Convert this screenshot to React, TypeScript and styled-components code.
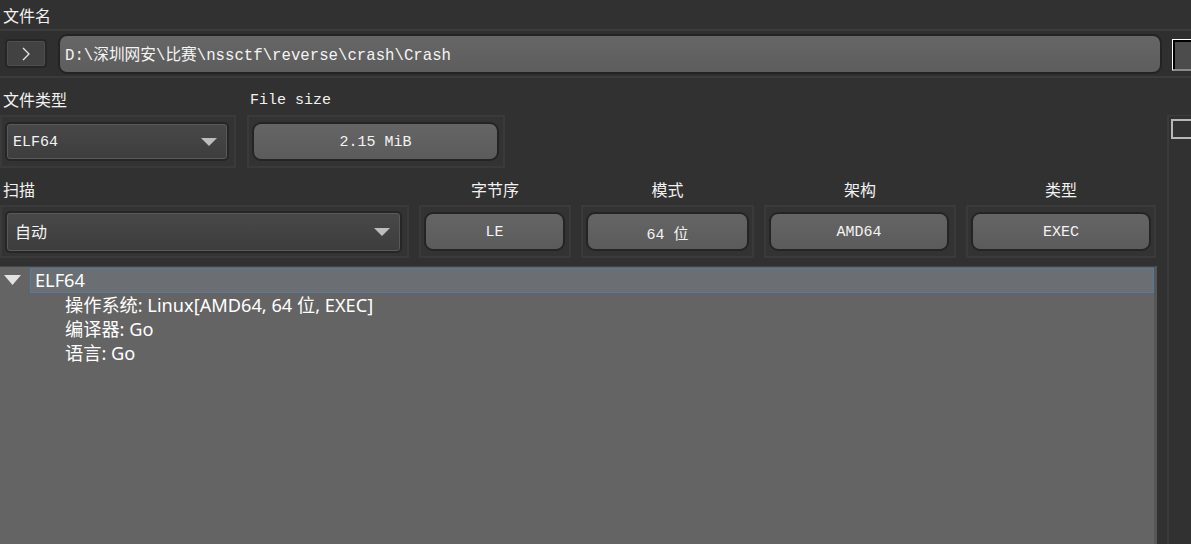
import React from "react";
import styled, { createGlobalStyle } from "styled-components";

const GlobalStyle = createGlobalStyle`
  html, body {
    margin: 0;
    padding: 0;
    background: #313131;
    overflow: hidden;
  }
  body {
    font-family: "Noto Sans", "Noto Sans CJK SC", sans-serif;
    color: #f2f2f2;
  }
  * { box-sizing: border-box; }
`;

const MONO = `"Liberation Mono", "Noto Sans CJK SC", monospace`;
const CJK = `"Noto Sans CJK SC", "Noto Sans", sans-serif`;

const Page = styled.div`
  width: 1191px;
  height: 544px;
  display: flex;
  flex-direction: column;
  overflow: hidden;
`;

const TopLabel = styled.div`
  height: 29px;
  padding-left: 3px;
  display: flex;
  align-items: center;
  font-family: ${CJK};
  font-size: 16px;
  color: #f2f2f2;
`;

const PathBar = styled.div`
  height: 49px;
  border-top: 2px solid #3b3b3b;
  border-bottom: 2px solid #3b3b3b;
  display: flex;
  align-items: center;
  padding-left: 5px;
  background: #2f2f2f;
`;

const IconButton = styled.div`
  width: 42px;
  height: 29px;
  flex: none;
  border: 2px solid #262626;
  border-radius: 4px;
  background: #424242;
  box-shadow: inset 0 0 0 1px #4e4e4e;
  display: flex;
  align-items: center;
  justify-content: center;
`;

const PathInput = styled.div`
  margin-left: 11px;
  width: 1104px;
  height: 40px;
  flex: none;
  border: 2px solid #232323;
  border-radius: 9px;
  background: linear-gradient(#666666, #5d5d5d);
  display: flex;
  align-items: center;
  padding-left: 5px;
  font-family: ${MONO};
  font-size: 15.7px;
  color: #f4f4f4;
  white-space: nowrap;
`;

const EdgeButton = styled.div`
  margin-left: 10px;
  width: 30px;
  height: 32px;
  flex: none;
  border-top: 1px solid #ffffff;
  border-left: 1px solid #ffffff;
  border-bottom: 2px solid #8a8a8a;
  background: #4c4c4c;
  box-shadow: inset 1px 1px 0 #000, inset 2px 2px 0 #000;
  margin-top: 2px;
`;

const Body = styled.div`
  flex: 1;
  display: flex;
  min-height: 0;
`;

const Main = styled.div`
  width: 1167px;
  flex: none;
  display: flex;
  flex-direction: column;
`;

const FieldGrid = styled.div<{ $cols: string; $gap?: number }>`
  display: grid;
  grid-template-columns: ${(p) => p.$cols};
  grid-template-rows: 37px 53px;
  column-gap: ${(p) => p.$gap ?? 10}px;
`;

const FieldLabel = styled.div<{ $center?: boolean; $mono?: boolean }>`
  display: flex;
  align-items: flex-end;
  justify-content: ${(p) => (p.$center ? "center" : "flex-start")};
  padding-left: ${(p) => (p.$center ? "0" : "3px")};
  padding-bottom: ${(p) => (p.$mono ? "6px" : "4px")};
  font-family: ${(p) => (p.$mono ? MONO : CJK)};
  font-size: ${(p) => (p.$mono ? "15px" : "16px")};
  color: #f2f2f2;
`;

const Frame = styled.div`
  border: 2px solid #3a3a3a;
  background: #333333;
  display: flex;
  align-items: center;
  padding: 0 3px;
`;

const Combo = styled.div<{ $w: number; $h: number }>`
  width: ${(p) => p.$w}px;
  height: ${(p) => p.$h}px;
  border: 2px solid #262626;
  border-radius: 5px;
  background: linear-gradient(#484848, #3d3d3d);
  box-shadow: inset 0 0 0 1px #595959;
  display: flex;
  align-items: center;
  justify-content: space-between;
  padding: 0 10px 0 6px;
`;

const ComboText = styled.span<{ $mono?: boolean }>`
  font-family: ${(p) => (p.$mono ? MONO : CJK)};
  font-size: ${(p) => (p.$mono ? "15px" : "16px")};
  color: #f4f4f4;
  padding-left: ${(p) => (p.$mono ? "0" : "2px")};
  margin-top: ${(p) => (p.$mono ? "1px" : "-2px")};
`;

const ValueButton = styled.div<{ $w: number }>`
  width: ${(p) => p.$w}px;
  height: 39px;
  border: 2px solid #242424;
  border-radius: 9px;
  background: linear-gradient(#656565, #5b5b5b);
  display: flex;
  align-items: center;
  justify-content: center;
  padding-top: 2px;
  font-family: ${MONO};
  font-size: 15px;
  color: #f4f4f4;
  white-space: pre;
`;

const Tree = styled.div`
  margin-top: 8px;
  width: 1157px;
  flex: 1;
  background: #646464;
  border-top: 1px solid #454545;
  border-right: 3px solid #575757;
  padding-top: 1px;
  font-family: "Noto Sans", "Noto Sans CJK SC", sans-serif;
  font-size: 18.2px;
  color: #ffffff;
`;

const TreeRow = styled.div<{ $depth: number }>`
  height: 24px;
  display: flex;
  align-items: center;
  padding-left: ${(p) => (p.$depth === 0 ? 4 : 65)}px;
  white-space: nowrap;
`;

const Caret = styled.div`
  width: 26px;
  display: flex;
  align-items: center;
  flex: none;
`;

const Selection = styled.div`
  flex: 1;
  height: 25px;
  display: flex;
  align-items: center;
  padding-left: 4px;
  background: #6b6f73;
  border: 1px solid #587a99;
`;

const Side = styled.div`
  flex: 1;
  margin-top: 37px;
  border-left: 2px solid #3b3b3b;
  display: flex;
  flex-direction: column;
`;

const SideFrame = styled.div`
  border-top: 1px solid #3b3b3b;
  padding: 3px 0 0 2px;
`;

const CheckBox = styled.div`
  width: 24px;
  height: 20px;
  border: 2px solid #b8b8b8;
  border-right: none;
  background: #323232;
`;

const DownArrow = ({ color, w, h }: { color: string; w: number; h: number }) => (
  <svg width={w} height={h} viewBox={`0 0 ${w} ${h}`}>
    <polygon points={`0,0 ${w},0 ${w / 2},${h}`} fill={color} />
  </svg>
);

export default function App() {
  return (
    <>
      <GlobalStyle />
      <Page>
        <TopLabel>文件名</TopLabel>
        <PathBar>
          <IconButton>
            <svg width="10" height="14" viewBox="0 0 10 14">
              <polyline points="2,1 8,7 2,13" fill="none" stroke="#e6e6e6" strokeWidth="1.3" />
            </svg>
          </IconButton>
          <PathInput>D:\深圳网安\比赛\nssctf\reverse\crash\Crash</PathInput>
          <EdgeButton />
        </PathBar>
        <Body>
          <Main>
            <FieldGrid $cols="236px 258px" $gap={11}>
              <FieldLabel>文件类型</FieldLabel>
              <FieldLabel $mono>File size</FieldLabel>
              <Frame>
                <Combo $w={224} $h={39}>
                  <ComboText $mono>ELF64</ComboText>
                  <DownArrow color="#bdbdbd" w={16} h={8} />
                </Combo>
              </Frame>
              <Frame>
                <ValueButton $w={247}>2.15 MiB</ValueButton>
              </Frame>
            </FieldGrid>
            <FieldGrid $cols="409px 152px 173px 192px 190px">
              <FieldLabel>扫描</FieldLabel>
              <FieldLabel $center>字节序</FieldLabel>
              <FieldLabel $center>模式</FieldLabel>
              <FieldLabel $center>架构</FieldLabel>
              <FieldLabel $center>类型</FieldLabel>
              <Frame>
                <Combo $w={397} $h={42}>
                  <ComboText>自动</ComboText>
                  <DownArrow color="#bdbdbd" w={16} h={8} />
                </Combo>
              </Frame>
              <Frame>
                <ValueButton $w={141}>LE</ValueButton>
              </Frame>
              <Frame>
                <ValueButton $w={163}>64 位</ValueButton>
              </Frame>
              <Frame>
                <ValueButton $w={180}>AMD64</ValueButton>
              </Frame>
              <Frame>
                <ValueButton $w={181}>EXEC</ValueButton>
              </Frame>
            </FieldGrid>
            <Tree>
              <TreeRow $depth={0}>
                <Caret>
                  <DownArrow color="#e2e2e2" w={17} h={10} />
                </Caret>
                <Selection>ELF64</Selection>
              </TreeRow>
              <TreeRow $depth={1}>操作系统: Linux[AMD64, 64 位, EXEC]</TreeRow>
              <TreeRow $depth={1}>编译器: Go</TreeRow>
              <TreeRow $depth={1}>语言: Go</TreeRow>
            </Tree>
          </Main>
          <Side>
            <SideFrame>
              <CheckBox />
            </SideFrame>
          </Side>
        </Body>
      </Page>
    </>
  );
}
